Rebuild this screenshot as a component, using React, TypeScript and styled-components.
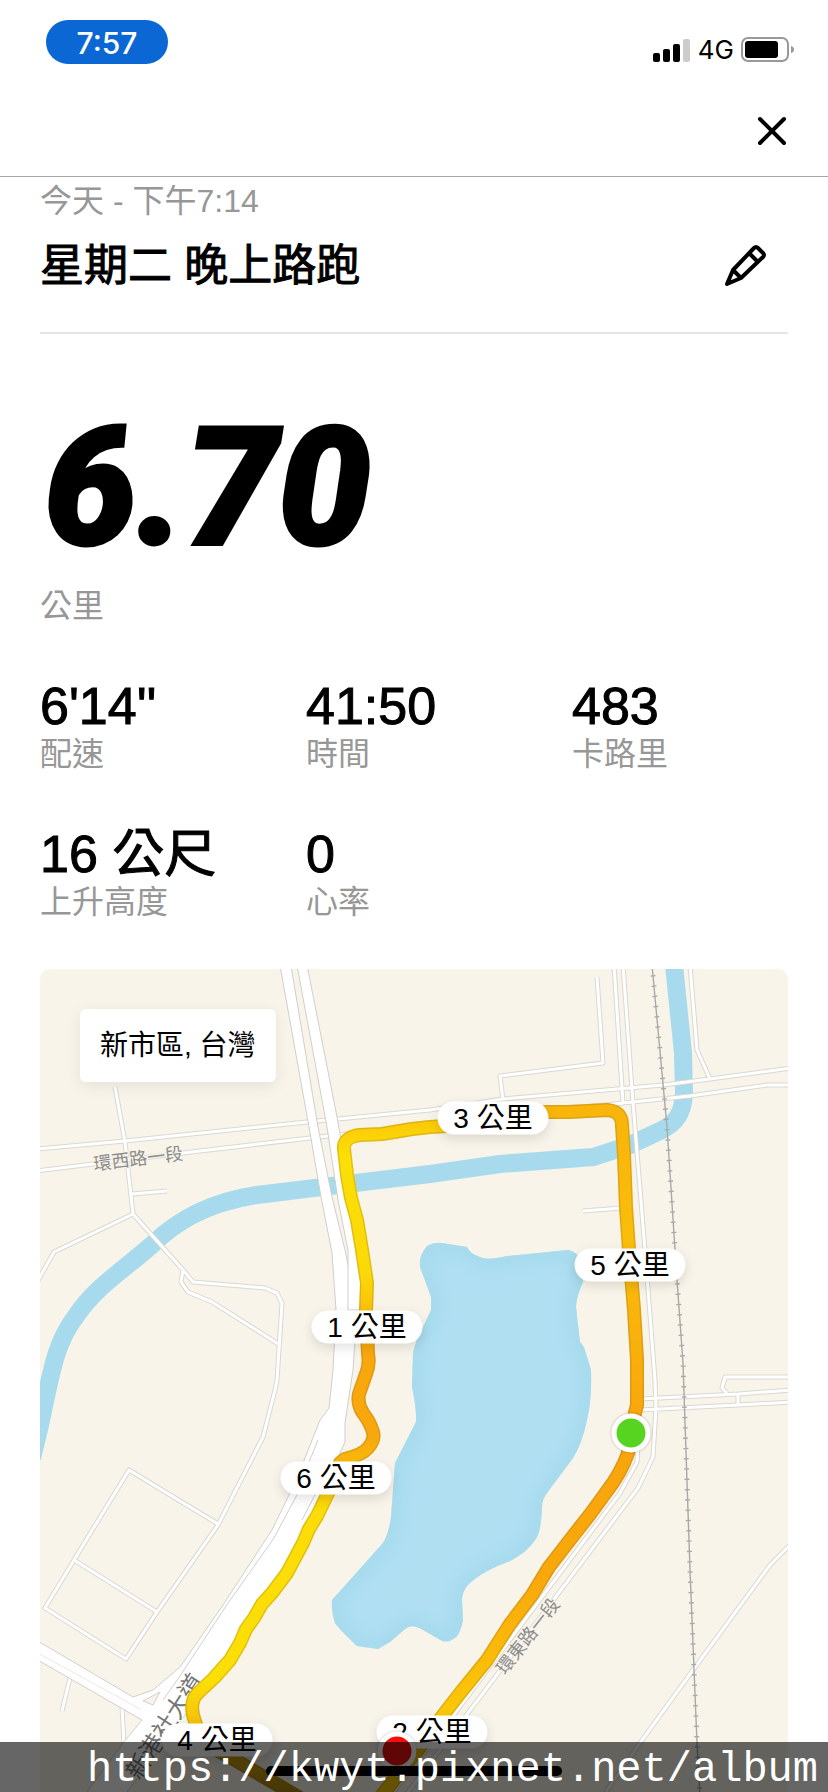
import React from 'react';
import styled, { createGlobalStyle } from 'styled-components';

const GlobalStyle = createGlobalStyle`
  * { box-sizing: border-box; }
  body {
    margin: 0;
    background: #fff;
    color: #000;
    font-family: "Liberation Sans", "Noto Sans CJK TC", sans-serif;
  }
  h1, h2, p, dl, dt, dd { margin: 0; font-weight: 400; }
`;

const MUTED = '#979797';

const Page = styled.div`
  position: relative;
  display: flex;
  flex-direction: column;
  overflow: hidden;
`;

const StatusBar = styled.div`
  display: flex;
  justify-content: space-between;
  align-items: flex-start;
  padding: 20px 34px 0 46px;
`;

const Clock = styled.time`
  width: 122px;
  height: 44px;
  border-radius: 22px;
  background: #0b67d3;
  color: #fff;
  font: 500 30px/46px Inter, sans-serif;
  text-align: center;
`;

const Signals = styled.div`
  display: flex;
  align-items: center;
  gap: 7px;
  height: 59px;
  font: 400 26px/30px Inter, sans-serif;
`;

const NavBar = styled.header`
  display: flex;
  justify-content: flex-end;
  padding: 30px 34px 23px;
  border-bottom: 1px solid #a6a6a6;
`;

const IconButton = styled.button`
  display: flex;
  align-items: center;
  justify-content: center;
  width: 44px;
  height: 44px;
  padding: 0;
  border: 0;
  background: none;
  color: #000;
`;

const Main = styled.main`
  padding: 0 40px;
`;

const Caption = styled.p`
  color: ${MUTED};
  font-size: 32px;
  line-height: 48px;
`;

const TitleBlock = styled.section`
  border-bottom: 2px solid #e5e5e2;
  padding-bottom: 37px;
`;

const TitleRow = styled.div`
  display: flex;
  align-items: center;
  justify-content: space-between;
  padding: 12px 21px 0 0;
`;

const Title = styled.h1`
  font-size: 44px;
  line-height: 58px;
  -webkit-text-stroke: 1px #000;
`;

const Distance = styled.section`
  padding-top: 79px;
`;

const DistanceValue = styled.p`
  padding-left: 4px;
  font: italic 900 165px/150px Roboto, sans-serif;
  -webkit-text-stroke: 3px #000;
`;

const DistanceUnit = styled(Caption)`
  padding-top: 19px;
`;

const Stats = styled.dl`
  display: grid;
  grid-template-columns: repeat(3, 1fr);
  gap: 52px 50px;
  padding: 46px 0 49px;
`;

const Stat = styled.div`
  display: flex;
  flex-direction: column-reverse;
`;

const StatLabel = styled.dt`
  color: ${MUTED};
  font-size: 32px;
  line-height: 36px;
  white-space: nowrap;
`;

const StatValue = styled.dd`
  height: 60px;
  font-size: 52px;
  line-height: 60px;
  white-space: nowrap;
  -webkit-text-stroke: 1px #000;
`;

const MapCard = styled.section`
  position: relative;
  aspect-ratio: 748 / 823;
  border-radius: 10px 10px 0 0;
  background: #f8f4e9;
  overflow: hidden;
`;

const MapDrawing = styled.svg`
  display: block;
  width: 100%;
  height: 100%;
`;

const PlaceTag = styled.div`
  position: absolute;
  top: 40px;
  left: 40px;
  padding: 0 20px;
  border-radius: 6px;
  background: #fff;
  box-shadow: 0 4px 16px rgba(0, 0, 0, 0.08);
  font-size: 28px;
  line-height: 73px;
`;

const Marker = styled.div<{ $x: number; $y: number }>`
  position: absolute;
  left: ${({ $x }) => (($x - 40) / 748) * 100}%;
  top: ${({ $y }) => (($y - 969) / 823) * 100}%;
  transform: translate(-50%, -50%);
`;

const KmPill = styled(Marker)`
  width: 111px;
  height: 33px;
  border-radius: 17px;
  background: #fff;
  box-shadow: 0 4px 12px rgba(0, 0, 0, 0.12);
  font-size: 28px;
  line-height: 34px;
  text-align: center;
  white-space: nowrap;
`;

const Dot = styled(Marker)<{ $color: string }>`
  width: 39px;
  height: 39px;
  border: 5px solid #fff;
  border-radius: 50%;
  background: ${({ $color }) => $color};
  box-shadow: 0 0 3px rgba(0, 0, 0, 0.25);
`;

const HomeIndicator = styled.div`
  position: absolute;
  bottom: 16px;
  left: 50%;
  width: 296px;
  height: 10px;
  border-radius: 5px;
  background: #000;
  transform: translateX(-50%);
`;

const Watermark = styled.footer`
  position: absolute;
  right: 0;
  bottom: 0;
  left: 0;
  height: 50px;
  padding-right: 10px;
  background: rgba(0, 0, 0, 0.6);
  color: #fff;
  font: 42px/56px "Liberation Mono", monospace;
  text-align: right;
  white-space: nowrap;
`;

const STATS = [
  { label: '配速', value: "6'14''" },
  { label: '時間', value: '41:50' },
  { label: '卡路里', value: '483' },
  { label: '上升高度', value: '16 公尺' },
  { label: '心率', value: '0' },
];

const PILLS = [
  { km: 3, x: 493, y: 1118 },
  { km: 5, x: 630, y: 1265 },
  { km: 1, x: 367, y: 1327 },
  { km: 6, x: 336, y: 1478 },
  { km: 4, x: 217, y: 1740 },
  { km: 2, x: 432, y: 1732 },
];

const ROADS = [
  'M115 1087 L125 1142 L133 1214 L183 1270 L193 1282 L265 1288 L277 1293 L282 1303 L277 1380 L275 1390 L263 1437 L218 1525 L157 1612 L126 1659 L45 1608 L74 1560 L129 1470 L218 1524',
  'M74 1560 L157 1612',
  'M183 1270 L181 1282 L188 1292 L212 1302 L280 1345',
  'M133 1214 L54 1252 L36 1284',
  'M132 1194 L167 1191',
  'M36 1149 L125 1141 L307 1122 L430 1110 L503 1099 L663 1085 L710 1079 L792 1068',
  'M36 1171 L183 1153 L310 1138 L500 1117 L623 1103 L690 1096 L767 1085 L792 1085',
  'M597 977 L603 1063 L500 1076 L503 1100',
  'M614 965 L623 1103',
  'M623 965 L633 1103 L645 1250 L655 1380 L656 1407 L653 1457 L638 1488 L468 1713 L405 1796',
  'M638 1445 L637 1462 L620 1493 L455 1713 L390 1796',
  'M690 965 L697 1050 L710 1079',
  'M583 1211 L622 1208',
  'M640 1399 L738 1394 L792 1390',
  'M640 1410 L738 1405 L792 1402',
  'M738 1394 V1405',
  'M792 1377 H725 L722 1388 L727 1393',
  'M792 1543 L770 1565 L693 1670 L640 1743 L603 1796',
  'M70 1678 L62 1711',
  'M122 1706 L124 1745',
  'M160 1727 L300 1796',
];

const RIVER =
  'M32 1458 L40 1425 C52 1368 56 1342 76 1316 C96 1286 124 1270 154 1243 C174 1224 204 1203 257 1195 C320 1187 400 1178 430 1174 L500 1164 L593 1157 L630 1145 L660 1131 C676 1123 683 1114 684 1093 L683 1053 L674 965';

const LAKE =
  'M427 1246 Q434 1242 442 1243 L467 1247 Q470 1254 480 1257 Q487 1261 507 1256 L568 1250 Q576 1250 583 1264 L583 1282 Q576 1298 576 1307 L580 1342 L584 1347 L591 1370 Q592 1400 587 1420 Q582 1444 573 1458 L547 1493 Q542 1500 542 1507 Q541 1530 537 1537 C530 1549 520 1556 510 1561 C495 1567 480 1573 468 1585 Q462 1592 462 1600 L463 1620 Q460 1635 455 1638 Q446 1645 437 1638 L423 1630 Q412 1623 405 1629 L390 1642 L378 1649 L357 1646 Q338 1628 335 1623 Q331 1611 332 1600 L383 1543 Q389 1533 391 1517 L395 1463 L416 1422 Q417 1412 412 1387 L413 1353 Q416 1339 423 1327 L431 1310 L431 1297 Q425 1280 421 1270 Q417 1258 427 1246 Z';

const HIGHWAY_WEST =
  'M279 960 L309 1127 L321 1197 L332 1253 L336 1310 L333 1370 L329 1408 L320 1420 L303 1463 L290 1493 L272 1530 L223 1605 L180 1667 L153 1690 L133 1697 L36 1640 V1659 L142 1720 L123 1743 L84 1796 H124 L185 1715 L250 1636 L320 1497 L345 1442 L345 1423 L353 1370 L357 1310 L345 1250 L332 1197 L318 1127 L290 960 Z';
const HIGHWAY_EAST =
  'M296 960 L327 1127 L338 1200 L348 1250 L348 1310 L362 1310 L362 1275 L355 1220 L337 1117 L306 960 Z';

const ROUTES = [
  {
    id: 'west',
    d: 'M197 1728 L193 1715 Q190 1700 198 1693 L214 1678 L230 1660 L240 1643 L246 1629 L254 1618 L262 1604 L272 1593 L287 1573 L303 1543 L309 1529 L317 1516 L330 1489 L340 1463 L345 1459 Q362 1455 368 1448 Q375 1440 373 1432 Q370 1422 363 1413 Q357 1404 359 1394 L366 1374 Q370 1364 368 1354 L366 1310 L367 1283 L362 1250 L357 1220 L351 1198 L347 1175 L344 1149 Q343 1137 360 1135 L382 1134 L412 1129 L430 1127 L447 1126',
  },
  {
    id: 'north',
    d: 'M447 1126 L500 1118 L547 1112 L568 1112 L607 1110 Q622 1111 622 1125 L624 1155 L626 1207 L629 1250 L634 1310 L637 1360 L637 1405 L630 1433',
  },
  {
    id: 'east',
    d: 'M630 1433 L628 1453 Q621 1473 607 1491 L591 1513 L573 1536 L549 1567 L532 1595 L510 1624 L487 1660 L461 1692 L443 1715 L418 1750 L378 1800',
  },
  { id: 'south', d: 'M197 1726 Q205 1746 230 1757 L300 1798' },
];

function CourseMap() {
  return (
    <MapDrawing viewBox="40 969 748 823" preserveAspectRatio="xMidYMin slice" aria-hidden="true">
      <defs>
        <linearGradient id="west" gradientUnits="userSpaceOnUse" x1="0" y1="1120" x2="0" y2="1730">
          <stop offset="0" stopColor="#fbc908" />
          <stop offset="0.06" stopColor="#fcdf06" />
          <stop offset="0.25" stopColor="#fbd908" />
          <stop offset="0.38" stopColor="#f8a80c" />
          <stop offset="0.52" stopColor="#f8a80c" />
          <stop offset="0.64" stopColor="#fbdc08" />
          <stop offset="0.92" stopColor="#fcdf06" />
          <stop offset="1" stopColor="#f3bc0a" />
        </linearGradient>
        <linearGradient id="north" gradientUnits="userSpaceOnUse" x1="0" y1="1110" x2="0" y2="1430">
          <stop offset="0" stopColor="#f9b50a" />
          <stop offset="0.4" stopColor="#fabd0a" />
          <stop offset="1" stopColor="#f8a50c" />
        </linearGradient>
        <linearGradient id="east" gradientUnits="userSpaceOnUse" x1="0" y1="1430" x2="0" y2="1720">
          <stop offset="0" stopColor="#f8a50c" />
          <stop offset="0.5" stopColor="#f9a80b" />
          <stop offset="1" stopColor="#fbca08" />
        </linearGradient>
        <linearGradient id="south" gradientUnits="userSpaceOnUse" x1="0" y1="1720" x2="0" y2="1792">
          <stop offset="0" stopColor="#f3bc0a" />
          <stop offset="1" stopColor="#b08a14" />
        </linearGradient>
        <clipPath id="lakeClip">
          <path d={LAKE} />
        </clipPath>
        <filter id="soft" x="-20%" y="-20%" width="140%" height="140%">
          <feGaussianBlur stdDeviation="9" />
        </filter>
      </defs>

      <path d={RIVER} fill="none" stroke="#a7daed" strokeWidth="18" />
      <path d={LAKE} fill="#b0dff2" />
      <g clipPath="url(#lakeClip)">
        <path d={LAKE} fill="none" stroke="#a4d9ec" strokeWidth="18" filter="url(#soft)" />
      </g>

      <g fill="none" strokeLinejoin="round">
        <g stroke="#d9d8d3" strokeWidth="5">
          {ROADS.map((d) => <path key={d} d={d} />)}
        </g>
        <g stroke="#fff" strokeWidth="3">
          {ROADS.map((d) => <path key={d} d={d} />)}
        </g>
      </g>

      <g fill="#fff" stroke="#d0cfcb" strokeWidth="1">
        <path d={HIGHWAY_WEST} />
        <path d={HIGHWAY_EAST} />
        <path d="M309 1462 L318 1440 M298 1493 L274 1538 L226 1606 L180 1676 L163 1700 M330 1466 L302 1520" fill="none" />
        <path d="M143 1701 L160 1692 L153 1705 Z" fill="#f8f4e9" />
        <path d="M36 1652 L140 1709" fill="none" stroke="#eee8e4" />
      </g>

      <g fill="none" stroke="#a9a9a9">
        <path d="M652 965 L667 1127 L677 1280 L683 1363 L690 1570 L697 1743 L700 1796" strokeWidth="1.4" />
        <path d="M652 965 L667 1127 L677 1280 L683 1363 L690 1570 L697 1743 L700 1796" strokeWidth="5" strokeDasharray="1.3 9" />
      </g>

      <g fill="#8c8c8c" stroke="#f8f4e9" strokeWidth="2" paintOrder="stroke" fontSize="18" textAnchor="middle" fontFamily="'Noto Sans CJK TC', sans-serif">
        <text transform="translate(139 1165) rotate(-7)">環西路一段</text>
        <text transform="translate(533 1640) rotate(-52)">環東路一段</text>
        <text transform="translate(172 1731) rotate(-57)" fontSize="24" fill="#777" stroke="#fff">新港社大道</text>
      </g>

      <g fill="none" strokeLinejoin="round">
        {ROUTES.map(({ id, d }) => (
          <g key={id}>
            <path d={d} stroke={`url(#${id})`} strokeWidth="14" />
            <path d={d} stroke="#8a6a30" strokeOpacity="0.25" strokeWidth="14" />
            <path d={d} stroke={`url(#${id})`} strokeWidth="11" />
          </g>
        ))}
      </g>
    </MapDrawing>
  );
}

export default function App() {
  return (
    <>
      <GlobalStyle />
      <Page>
        <StatusBar>
          <Clock>7:57</Clock>
          <Signals>
            <svg width="38" height="24" viewBox="0 0 38 24" aria-hidden="true">
              <rect x="0" y="15" width="7" height="9" rx="2" />
              <rect x="10" y="11" width="7" height="13" rx="2" />
              <rect x="20" y="6" width="7" height="18" rx="2" />
              <rect x="30" y="1" width="7" height="23" rx="2" fill="#ccc" />
            </svg>
            <span>4G</span>
            <svg width="53" height="26" viewBox="0 0 53 26" aria-hidden="true">
              <rect x="1" y="1" width="46" height="23" rx="6" fill="none" stroke="#999" strokeWidth="2" />
              <rect x="4" y="4" width="33" height="17" rx="3" />
              <path d="M50 9 Q53 10 53 12.5 Q53 15 50 16 Z" fill="#999" />
            </svg>
          </Signals>
        </StatusBar>

        <NavBar>
          <IconButton type="button" aria-label="關閉">
            <svg width="30" height="30" viewBox="0 0 30 30" aria-hidden="true">
              <path d="M3 3 L27 27 M27 3 L3 27" fill="none" stroke="#000" strokeWidth="4" strokeLinecap="round" />
            </svg>
          </IconButton>
        </NavBar>

        <Main>
          <TitleBlock>
            <Caption>今天 - 下午7:14</Caption>
            <TitleRow>
              <Title>星期二 晚上路跑</Title>
              <IconButton type="button" aria-label="編輯">
                <svg width="44" height="44" viewBox="0 0 44 44" fill="none" stroke="#000" strokeWidth="4" strokeLinejoin="round" aria-hidden="true">
                  <path d="M4 40 L10 26 L31 4 Q33 2 35 4 L40 9 Q42 11 40 13 L18 34 Z" />
                  <path d="M26 9 L35 18 M10 26 L18 34" />
                  <path d="M4 40 L6 35 L9 38 Z" fill="#000" strokeWidth="2" />
                </svg>
              </IconButton>
            </TitleRow>
          </TitleBlock>

          <Distance>
            <DistanceValue>6.70</DistanceValue>
            <DistanceUnit>公里</DistanceUnit>
          </Distance>

          <Stats>
            {STATS.map(({ label, value }) => (
              <Stat key={label}>
                <StatLabel>{label}</StatLabel>
                <StatValue>{value}</StatValue>
              </Stat>
            ))}
          </Stats>

          <MapCard aria-label="路線地圖">
            <CourseMap />
            <PlaceTag>新市區, 台灣</PlaceTag>
            {PILLS.map(({ km, x, y }) => (
              <KmPill key={km} $x={x} $y={y}>{km} 公里</KmPill>
            ))}
            <Dot $x={631} $y={1433} $color="#57d41f" />
            <Dot $x={397} $y={1751} $color="#f01010" />
          </MapCard>
        </Main>

        <HomeIndicator />
        <Watermark>https://kwyt.pixnet.net/album</Watermark>
      </Page>
    </>
  );
}
